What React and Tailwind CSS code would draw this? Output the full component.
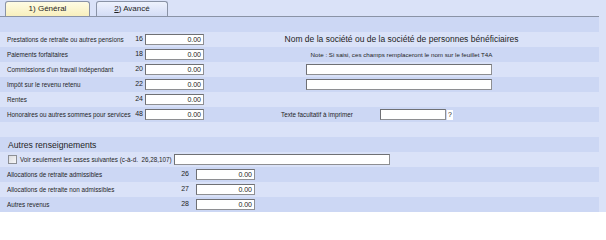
import React from "react";

const font = { fontFamily: '"Liberation Sans", Arial, sans-serif' };

function Box({ value, className = "" }) {
  return (
    <div
      className={
        "h-[11px] bg-white border border-[#8e8f92] border-t-[#6f7074] border-l-[#6f7074] text-right pr-[2px] text-[7px] leading-[9px] text-[#222] " +
        className
      }
    >
      {value}
    </div>
  );
}

function Row({ i, children }) {
  return (
    <div className={"h-[15px] w-[599px] flex items-center " + (i % 2 === 0 ? "bg-[#ccd7f4]" : "bg-[#dae2f8]")}>
      {children}
    </div>
  );
}

function LeftField({ label, num }) {
  return (
    <div className="flex items-center w-[204px] shrink-0">
      <div className="w-[134px] pl-[7px] text-[6.3px] whitespace-nowrap">{label}</div>
      <div className="w-[9px] text-right text-[7px]">{num}</div>
      <Box value="0.00" className="ml-[2px] w-[59px]" />
    </div>
  );
}

function AllocField({ label, num }) {
  return (
    <div className="flex items-center">
      <div className="w-[181px] pl-[7px] text-[6.3px] whitespace-nowrap">{label}</div>
      <div className="w-[8px] text-right text-[7px]">{num}</div>
      <Box value="0.00" className="ml-[7px] w-[59px]" />
    </div>
  );
}

export default function App() {
  return (
    <div className="w-[606px] h-[212px] bg-[#dae2f8] text-[#1e1e1e] overflow-hidden" style={font}>
      {/* tabs */}
      <div className="h-[17px] w-[599px] border-b border-[#8a93a6] flex items-end pl-[5px] gap-[6px]">
        <div className="w-[85px] h-[15px] rounded-t-[3px] border border-b-0 border-[#8a93a6] bg-gradient-to-b from-[#fffce4] to-[#f8efbd] text-[8px] flex items-center justify-center">
          1) Général
        </div>
        <div className="w-[72px] h-[15px] rounded-t-[3px] border border-b-0 border-[#8a93a6] bg-gradient-to-b from-[#eef2fd] to-[#d3dcf5] text-[8px] flex items-center justify-center">
          <span className="underline">2</span>) Avancé
        </div>
      </div>

      <Row i={0} />
      <Row i={1}>
        <LeftField label="Prestations de retraite ou autres pensions" num="16" />
        <div className="flex-1 text-center text-[8.5px] whitespace-nowrap">
          Nom de la société ou de la société de personnes bénéficiaires
        </div>
      </Row>
      <Row i={2}>
        <LeftField label="Paiements forfaitaires" num="18" />
        <div className="flex-1 text-center text-[6.2px] whitespace-nowrap">
          Note : Si saisi, ces champs remplaceront le nom sur le feuillet T4A
        </div>
      </Row>
      <Row i={3}>
        <LeftField label="Commissions d'un travail indépendant" num="20" />
        <Box value="" className="ml-[102px] w-[186px]" />
      </Row>
      <Row i={4}>
        <LeftField label="Impôt sur le revenu retenu" num="22" />
        <Box value="" className="ml-[102px] w-[186px]" />
      </Row>
      <Row i={5}>
        <LeftField label="Rentes" num="24" />
      </Row>
      <Row i={6}>
        <LeftField label="Honoraires ou autres sommes pour services" num="48" />
        <div className="ml-[77px] w-[99px] text-[6.3px] whitespace-nowrap">Texte facultatif à imprimer</div>
        <Box value="" className="w-[66px]" />
        <div className="ml-[1px] h-[10px] px-[1px] bg-white text-[7px] leading-[10px]">?</div>
      </Row>
      <Row i={7} />
      <Row i={8}>
        <div className="pl-[8px] pt-[2px] text-[8.6px]">Autres renseignements</div>
      </Row>
      <Row i={9}>
        <div className="ml-[8px] w-[9px] h-[9px] border border-[#8c8f95] bg-gradient-to-br from-[#dcdde0] to-[#f7f7f8]" />
        <div className="ml-[3px] w-[154px] text-[6.3px] whitespace-nowrap">
          Voir seulement les cases suivantes (c-à-d.&nbsp; 26,28,107)
        </div>
        <Box value="" className="w-[216px]" />
      </Row>
      <Row i={10}>
        <AllocField label="Allocations de retraite admissibles" num="26" />
      </Row>
      <Row i={11}>
        <AllocField label="Allocations de retraite non admissibles" num="27" />
      </Row>
      <Row i={12}>
        <AllocField label="Autres revenus" num="28" />
      </Row>
    </div>
  );
}
